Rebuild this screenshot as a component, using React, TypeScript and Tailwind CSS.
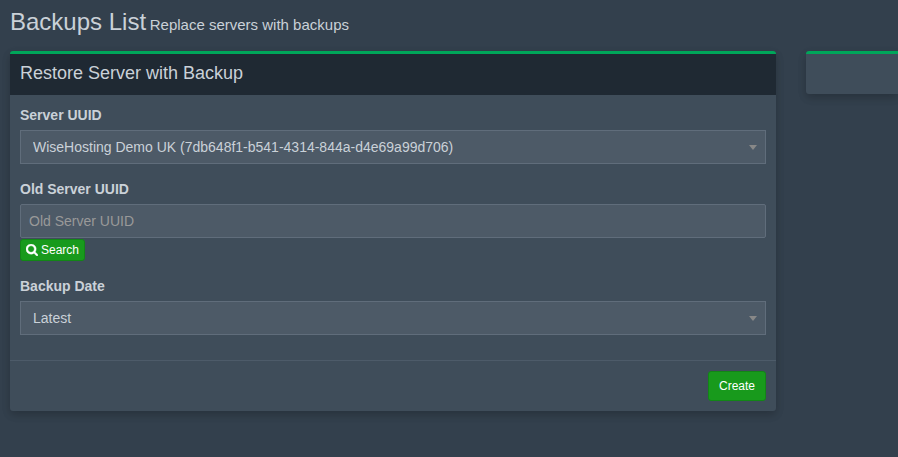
import type { ReactNode } from "react";

const boxShadow = "shadow-[0_4px_8px_rgba(0,0,0,0.12),0_3px_10px_rgba(0,0,0,0.1)]";

function SearchIcon() {
  return (
    <svg viewBox="0 0 1664 1664" className="size-3 fill-current stroke-current stroke-[60]" aria-hidden="true">
      <path d="M1152 704q0-185-131.5-316.5T704 256 387.5 387.5 256 704t131.5 316.5T704 1152t316.5-131.5T1152 704zm512 832q0 52-38 90t-90 38q-54 0-90-38l-343-342q-179 124-399 124-143 0-273.5-55.5t-225-150-150-225T0 704t55.5-273.5 150-225 225-150T704 0t273.5 55.5 225 150 150 225T1408 704q0 220-124 399l343 343q37 37 37 90z" />
    </svg>
  );
}

function SelectField({ id, label, options }: { id: string; label: string; options: string[] }) {
  return (
    <div className="mb-[15px]">
      <label htmlFor={id} className="mb-[5px] block font-bold">
        {label}
      </label>
      <div className="relative">
        <select
          id={id}
          className="block h-[34px] w-full appearance-none border border-[#606d7b] bg-[#4d5a67] pr-8 pl-3 outline-none"
        >
          {options.map((option) => (
            <option key={option}>{option}</option>
          ))}
        </select>
        <span className="pointer-events-none absolute top-[15px] right-[9px] border-x-4 border-t-5 border-x-transparent border-t-[#888888]" />
      </div>
    </div>
  );
}

function Box({ className, children }: { className: string; children?: ReactNode }) {
  return (
    <section className={`rounded-[3px] border-t-3 border-[#00a65a] bg-[#3f4d5a] ${boxShadow} ${className}`}>
      {children}
    </section>
  );
}

export default function App() {
  return (
    <div className="min-h-screen overflow-hidden bg-[#33404d] pl-[10px] font-['Liberation_Sans',Arial,sans-serif] text-sm text-[#cad1d8]">
      <header className="pt-2 pb-3">
        <h1 className="text-2xl leading-7">
          Backups List <small className="-ml-[3px] text-[15px]">Replace servers with backups</small>
        </h1>
      </header>

      <main className="flex items-start gap-[30px]">
        <Box className="min-w-0 flex-1">
          <div className="bg-[#1f2933] px-[10px] pt-[7px] pb-[9px]">
            <h2 className="text-lg leading-[25px]">Restore Server with Backup</h2>
          </div>
          <form onSubmit={(event) => event.preventDefault()}>
            <div className="p-[10px]">
              <SelectField
                id="server"
                label="Server UUID"
                options={["WiseHosting Demo UK (7db648f1-b541-4314-844a-d4e69a99d706)"]}
              />
              <div className="mb-[15px]">
                <label htmlFor="old-server" className="mb-[5px] block font-bold">
                  Old Server UUID
                </label>
                <input
                  id="old-server"
                  type="text"
                  placeholder="Old Server UUID"
                  className="block h-[34px] w-full rounded-[2px] border border-[#606d7b] bg-[#4d5a67] px-2 outline-none placeholder:text-[#999999]"
                />
                <button
                  type="button"
                  className="mt-px flex h-[22px] items-center gap-[3px] rounded-[3px] border border-[#128616] bg-[#189a1c] px-[5px] text-xs text-white"
                >
                  <SearchIcon />
                  Search
                </button>
              </div>
              <SelectField id="backup-date" label="Backup Date" options={["Latest"]} />
            </div>
            <div className="flex justify-end border-t border-[#4d5b69] p-[10px]">
              <button
                type="submit"
                className="h-[30px] rounded-[3px] border border-[#128616] bg-[#189a1c] px-[10px] text-xs text-white"
              >
                Create
              </button>
            </div>
          </form>
        </Box>
        <Box className="h-[43px] w-[92px] rounded-r-none" />
      </main>
    </div>
  );
}
